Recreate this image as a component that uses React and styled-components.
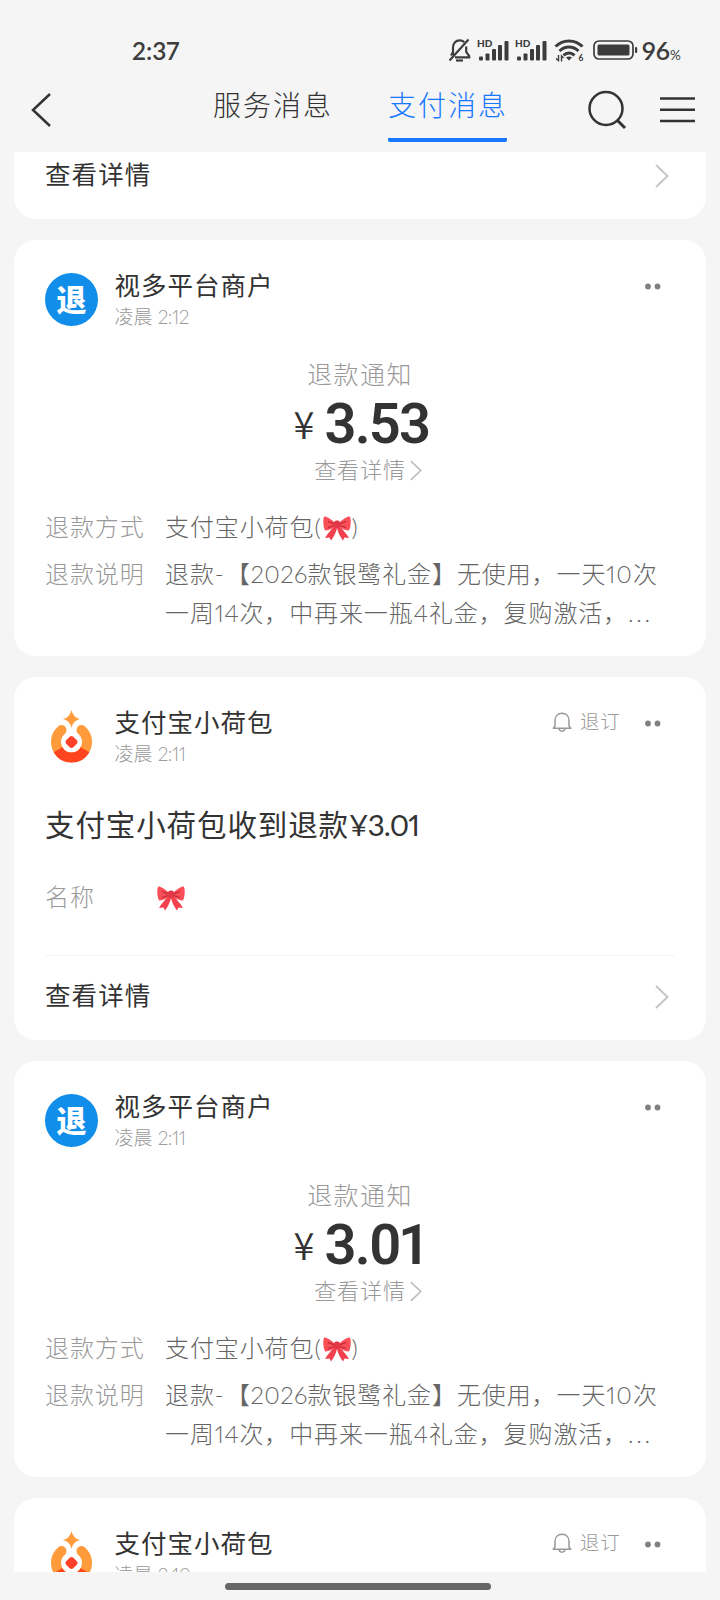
import React from 'react';
import styled, { createGlobalStyle } from 'styled-components';

const GlobalStyle = createGlobalStyle`
  * {
    box-sizing: border-box;
  }

  body {
    margin: 0;
    background: #f5f5f5;
    color: #333;
    font-family: Lato, 'Noto Sans CJK SC', sans-serif;
    font-variant-numeric: proportional-nums;
  }
`;

const Screen = styled.div`
  width: 720px;
  height: 1600px;
  display: flex;
  flex-direction: column;
  background: #f5f5f5;
  overflow: hidden;
`;

const StatusBar = styled.div`
  height: 76px;
  padding: 24px 36px 0 132px;
  display: flex;
  align-items: center;
  justify-content: space-between;
  color: #3c3c3c;
  flex-shrink: 0;
`;

const Clock = styled.span`
  font-size: 24.5px;
  font-weight: 600;
`;

const StatusIcons = styled.div`
  display: flex;
  align-items: center;

  svg {
    display: block;
    flex-shrink: 0;
  }
`;

const Signals = styled.div`
  display: flex;
  margin: 0 4px 0 1px;
`;

const Percent = styled.span`
  margin-left: 3px;
  font-size: 25px;
  font-weight: 600;
  width: 42px;
  white-space: nowrap;

  small {
    font-size: 13.5px;
    font-weight: 400;
  }
`;

const NavBar = styled.div`
  height: 76px;
  padding: 0 24px 0 29px;
  display: flex;
  flex-shrink: 0;
`;

const BackButton = styled.button`
  width: 184px;
  padding: 16px 0 0;
  border: 0;
  background: none;
  text-align: left;
  display: flex;
`;

const Tab = styled.div`
  width: 119px;
  height: 66px;
  margin-right: 56px;
  border-bottom: 4px solid ${({ $active }) => ($active ? '#1677ff' : 'transparent')};
  border-radius: 2px;
  color: ${({ $active }) => ($active ? '#1677ff' : '#333')};
  font-size: 28px;
  font-weight: 300;
  letter-spacing: 2px;
  line-height: 58px;
  white-space: nowrap;
`;

const NavActions = styled.div`
  display: flex;
  gap: 33px;
  padding-top: 14px;
  margin-left: 24px;

  svg {
    flex-shrink: 0;
  }
`;

const Feed = styled.div`
  height: 1420px;
  padding: 0 14px;
  display: flex;
  flex-direction: column;
  gap: 21px;
  overflow: hidden;
  flex-shrink: 0;
`;

const Card = styled.div`
  height: ${({ $height }) => $height}px;
  padding: 0 31px;
  background: #fff;
  border-radius: ${({ $cut }) => ($cut ? '0 0 22px 22px' : '22px')};
  flex-shrink: 0;
  display: flex;
  flex-direction: column;
`;

const CardHeader = styled.div`
  height: 106px;
  padding-top: 28px;
  display: flex;
  flex-shrink: 0;
`;

const Avatar = styled.div`
  width: 53px;
  height: 53px;
  margin: 5px 16.5px 0 0;
  border-radius: 50%;
  background: ${({ $color }) => $color};
  color: #fff;
  font-size: 30px;
  font-weight: 900;
  line-height: 52px;
  text-align: center;
`;

const Sender = styled.div`
  flex: 1;
`;

const Name = styled.div`
  font-size: 25.5px;
  letter-spacing: 1px;
  line-height: 34px;
`;

const Time = styled.div`
  color: #999;
  font-size: 19px;
  font-weight: 300;
  line-height: 30px;
`;

const Digits = styled.span`
  letter-spacing: ${({ $spacing }) => $spacing}px;
`;

const HeaderActions = styled.div`
  height: 36px;
  display: flex;
  align-items: center;
  padding-right: 14.5px;
`;

const Unsubscribe = styled.div`
  display: flex;
  align-items: center;
  gap: 8px;
  margin-right: 24px;
  color: #999;
  font-size: 19.5px;
  font-weight: 300;
  letter-spacing: 0.8px;
  line-height: 30px;
  padding-bottom: 2px;
`;

const Notice = styled.div`
  display: flex;
  flex-direction: column;
  align-items: center;
  height: 152px;
  margin-top: 9px;
  flex-shrink: 0;
`;

const NoticeTitle = styled.div`
  color: #999;
  font-size: 25px;
  font-weight: 300;
  letter-spacing: 1.4px;
  line-height: 38px;
`;

const Amount = styled.div`
  display: flex;
  width: 133px;
  height: 59px;
  line-height: 62px;
  font-family: Roboto, sans-serif;
  font-size: 56px;
  font-weight: 600;
  letter-spacing: -1.8px;
  white-space: nowrap;
`;

const Currency = styled.span`
  width: 31px;
  flex-shrink: 0;
  font-family: 'Noto Sans CJK SC', sans-serif;
  font-size: 38px;
  font-weight: 350;
  line-height: 60px;
`;

const NoticeLink = styled.div`
  display: flex;
  align-items: center;
  gap: 4px;
  margin-left: 16px;
  color: #999;
  font-size: 22px;
  font-weight: 300;
  letter-spacing: 0.9px;
  line-height: 36px;
`;

const Field = styled.div`
  display: flex;
  margin-bottom: 8px;
  font-size: 24px;
  font-weight: 300;
  letter-spacing: 0.9px;
  line-height: 39px;
  white-space: nowrap;
`;

const Label = styled.div`
  width: ${({ $width }) => $width || 120}px;
  color: #999;
`;

const Value = styled.div`
  color: #666;

  svg {
    margin: 0 1px;
    vertical-align: -5px;
  }
`;

const Headline = styled.div`
  height: 94px;
  padding-top: 20px;
  font-size: 29.5px;
  letter-spacing: 0.9px;
  line-height: 44px;
  flex-shrink: 0;
`;

const Footer = styled.div`
  height: ${({ $cut }) => ($cut ? 67 : 85)}px;
  margin-top: auto;
  border-top: 1px solid ${({ $cut }) => ($cut ? 'transparent' : '#f5f5f5')};
  display: flex;
  align-items: center;
  justify-content: space-between;
  padding: 0 6px ${({ $cut }) => ($cut ? 20 : 2)}px 0;
  flex-shrink: 0;
`;

const FooterText = styled.span`
  padding-bottom: 7px;
  font-size: 25.5px;
  letter-spacing: 1.1px;
`;

const HomeBar = styled.div`
  width: 266px;
  height: 7px;
  margin: 10.5px 0 0 225px;
  border-radius: 4px;
  background: #666;
`;

function MutedBellIcon() {
  return (
    <svg width="24" height="25" viewBox="0 0 24 25" fill="none" stroke="#3c3c3c" strokeWidth="2.200">
      <path d="M5 17V9.500C5 5 8 2.300 11.500 2.300c2 0 3.500.6 4.700 1.800M18.200 8.500V14l3 4v1.300H7M4.800 14.500L3 17.500" />
      <path d="M20.500 1.500L1.500 22.500" />
      <path d="M8 22.500h7" />
    </svg>
  );
}

function SignalIcon() {
  return (
    <svg width="38" height="25" viewBox="0 0 38 25" fill="#3c3c3c">
      <text x="4" y="9" fontFamily="Lato" fontSize="10" fontWeight="900">HD</text>
      <rect x="6" y="18.500" width="4" height="4" rx="1" />
      <rect x="12.500" y="15.500" width="4" height="7" rx="1" />
      <rect x="19" y="11" width="4" height="11.500" rx="1" />
      <rect x="25" y="7" width="4" height="15.500" rx="1" />
      <rect x="31.500" y="3" width="4" height="19.500" rx="1" />
    </svg>
  );
}

function WifiIcon() {
  return (
    <svg width="40" height="25" viewBox="0 0 40 25" fill="none" stroke="#3c3c3c" strokeWidth="3">
      <path d="M2.500 8.500C10 1 22 1 29.500 8.500" />
      <path d="M6.500 13c5.500-5.300 13.500-5.300 19 0" />
      <path d="M10.500 17.300c3.200-3 7.800-3 11 0" />
      <path d="M16 22.500l-3-3q3-2 6 0z" fill="#3c3c3c" stroke="none" />
      <path d="M5.500 17v5.500l-2.500-2M8.500 23.500V18l2 2" strokeWidth="1.400" />
      <text x="25.500" y="23" fill="#3c3c3c" stroke="none" fontFamily="Lato" fontSize="8.500" fontWeight="700">6</text>
    </svg>
  );
}

function BatteryIcon() {
  return (
    <svg width="46" height="20" viewBox="0 0 46 20" fill="none">
      <rect x="1" y="1" width="39" height="18" rx="5" stroke="#3c3c3c" strokeWidth="1.700" />
      <rect x="4.500" y="4.500" width="32" height="11" rx="1.500" fill="#3c3c3c" />
      <rect x="42" y="7" width="2.200" height="6" rx="1" fill="#3c3c3c" />
    </svg>
  );
}

function Chevron({ width = 14, height = 24, stroke = 2, color = '#c6c6c6' }) {
  return (
    <svg width={width} height={height} viewBox="0 0 14 24" fill="none" stroke={color} strokeWidth={stroke}>
      <path d="M1 1L12.500 12L1 23" />
    </svg>
  );
}

function BowIcon() {
  return (
    <svg width="28" height="25" viewBox="0 0 28 25">
      <path d="M11.500 10C8 14 5 17 2 22l4.500-.5L8 24.500c3-4 5-8 6-12.500 1 4.500 3 8.500 6 12.500l1.500-3 4.500.5c-3-5-6-8-9.500-12z" fill="#f2404c" />
      <path d="M12 7C8 3 4 .5 1.300.5-.5 3 .3 11 2 14.500 5 14.500 9 13 12 10.500z" fill="#fb4f58" />
      <path d="M16 7c4-4 8-6.500 10.700-6.500C28.500 3 27.700 11 26 14.500c-3 0-7-1.500-10-4z" fill="#fb4f58" />
      <path d="M11.500 8L5 5.500M11.500 9.500L5 11.500M16.500 8L23 5.500M16.500 9.500L23 11.500" stroke="#b82634" strokeWidth="1.100" />
      <rect x="11" y="4.500" width="6" height="7.500" rx="2.500" fill="#e23746" />
    </svg>
  );
}

function DotsIcon() {
  return (
    <svg width="16" height="7" viewBox="0 0 16 7" fill="#808080">
      <circle cx="3" cy="3.500" r="2.900" />
      <circle cx="12.500" cy="3.500" r="2.900" />
    </svg>
  );
}

function BellIcon() {
  return (
    <svg width="20" height="21" viewBox="0 0 20 21" fill="none" stroke="#999" strokeWidth="1.500">
      <path d="M3 14V8.500C3 4 6 1.200 10 1.200S17 4 17 8.500V14l1.700 2.300H1.300z" strokeLinejoin="round" />
      <path d="M7 16.500c.5 3.500 5.500 3.500 6 0" />
    </svg>
  );
}

function PouchLogo() {
  return (
    <svg width="53" height="53" viewBox="0 0 53 53" fill="none">
      <path d="M16.500 20.100A15.500 15.500 0 1 0 36.500 20.100" stroke="#ff9b3a" strokeWidth="10" strokeLinecap="round" />
      <path d="M13 39.700A15.500 15.500 0 0 0 40 39.700" stroke="#ff4420" strokeWidth="10" />
      <path d="M24.700 26.700q1.800-1.600 3.600 0l3.500 3.500q1.600 1.800 0 3.600l-3.500 3.500q-1.800 1.600-3.600 0l-3.500-3.500q-1.600-1.800 0-3.600z" fill="#ff4028" />
      <path d="M26.500 0q1.500 7.500 8.500 9-7 1.500-8.500 9-1.500-7.500-8.500-9 7-1.500 8.500-9z" fill="#ff9b3a" />
    </svg>
  );
}

function Header({ pouch, name, time }) {
  return (
    <CardHeader>
      <Avatar $color={pouch ? 'transparent' : '#108ee9'}>{pouch ? <PouchLogo /> : '退'}</Avatar>
      <Sender>
        <Name>{name}</Name>
        <Time>
          凌晨 <Digits $spacing={-0.4}>{time}</Digits>
        </Time>
      </Sender>
      <HeaderActions>
        {pouch && (
          <Unsubscribe>
            <BellIcon />
            退订
          </Unsubscribe>
        )}
        <DotsIcon />
      </HeaderActions>
    </CardHeader>
  );
}

function RefundCard({ time, amount }) {
  return (
    <Card $height={416}>
      <Header name="视多平台商户" time={time} />
      <Notice>
        <NoticeTitle>退款通知</NoticeTitle>
        <Amount>
          <Currency>¥</Currency>
          {amount}
        </Amount>
        <NoticeLink>
          查看详情
          <Chevron width={12} height={21} stroke={1.8} color="#bbb" />
        </NoticeLink>
      </Notice>
      <Field>
        <Label>退款方式</Label>
        <Value>
          支付宝小荷包(<BowIcon />)
        </Value>
      </Field>
      <Field>
        <Label>退款说明</Label>
        <Value>
          退款<Digits $spacing={2}>-</Digits>【<Digits $spacing={0.3}>2026</Digits>款银鹭礼金】无使用，一天
          <Digits $spacing={1}>10</Digits>次
          <br />
          一周<Digits $spacing={0.6}>14</Digits>次，中再来一瓶4礼金，复购激活，
          <Digits $spacing={2.6}>...</Digits>
        </Value>
      </Field>
    </Card>
  );
}

function PouchCard({ time, amount }) {
  return (
    <Card $height={363}>
      <Header pouch name="支付宝小荷包" time={time} />
      <Headline>
        支付宝小荷包收到退款<Digits $spacing={-0.8}>¥{amount}</Digits>
      </Headline>
      <Field>
        <Label $width={111}>名称</Label>
        <Value>
          <BowIcon />
        </Value>
      </Field>
      <Footer>
        <FooterText>查看详情</FooterText>
        <Chevron />
      </Footer>
    </Card>
  );
}

export default function App() {
  return (
    <Screen>
      <GlobalStyle />
      <StatusBar>
        <Clock>2:37</Clock>
        <StatusIcons>
          <MutedBellIcon />
          <Signals>
            <SignalIcon />
            <SignalIcon />
          </Signals>
          <WifiIcon />
          <BatteryIcon />
          <Percent>
            96<small>%</small>
          </Percent>
        </StatusIcons>
      </StatusBar>
      <NavBar>
        <BackButton>
          <svg width="24" height="36" viewBox="0 0 24 36" fill="none" stroke="#333" strokeWidth="2.500">
            <path d="M21 2L4 18l17 16" />
          </svg>
        </BackButton>
        <Tab>服务消息</Tab>
        <Tab $active>支付消息</Tab>
        <NavActions>
          <svg width="40" height="40" viewBox="0 0 40 40" fill="none" stroke="#333" strokeWidth="2.500">
            <circle cx="19" cy="18.500" r="16.500" />
            <path d="M30 30l8 8" strokeWidth="3" />
          </svg>
          <svg width="36" height="40" viewBox="0 0 36 40" stroke="#333" strokeWidth="2.500">
            <path d="M0 8.500h35M0 19.700h35M0 31h35" />
          </svg>
        </NavActions>
      </NavBar>
      <Feed>
        <Card $height={67} $cut>
          <Footer $cut>
            <FooterText>查看详情</FooterText>
            <Chevron />
          </Footer>
        </Card>
        <RefundCard time="2:12" amount="3.53" />
        <PouchCard time="2:11" amount="3.01" />
        <RefundCard time="2:11" amount="3.01" />
        <PouchCard time="2:10" amount="3.01" />
      </Feed>
      <HomeBar />
    </Screen>
  );
}
